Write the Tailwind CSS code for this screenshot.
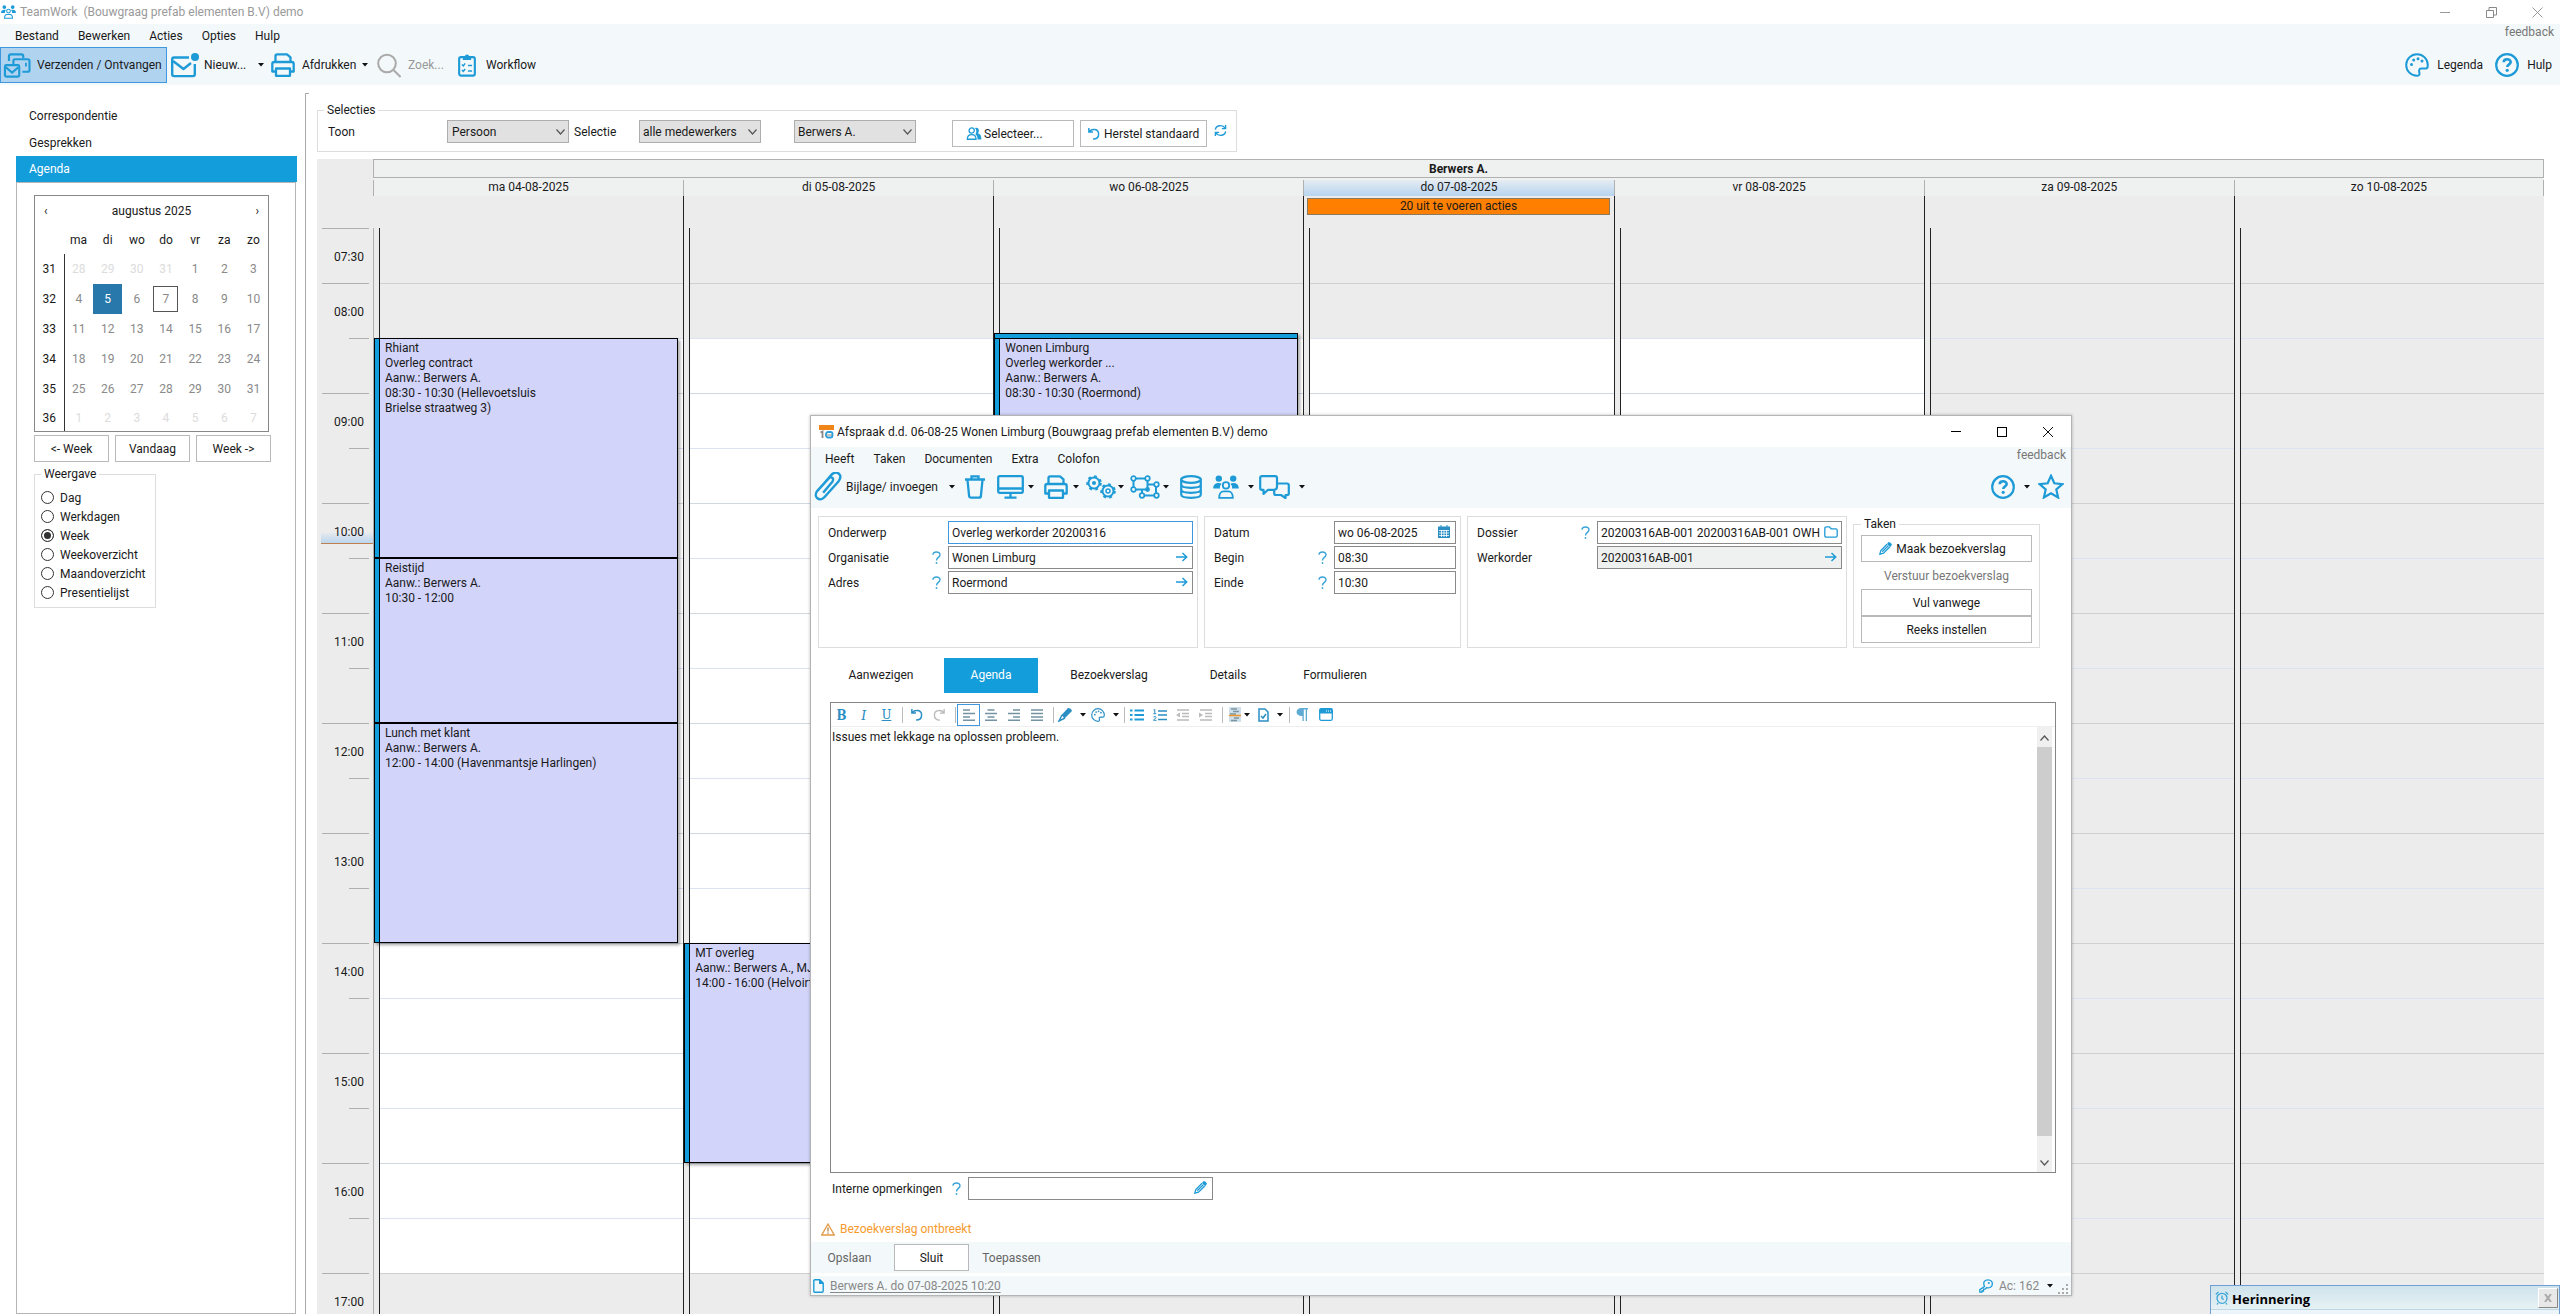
<!DOCTYPE html>
<html lang="nl">
<head>
<meta charset="utf-8">
<meta name="viewport" content="width=device-width, initial-scale=1">
<title>TeamWork (Bouwgraag prefab elementen B.V) demo</title>
<script src="https://cdn.jsdelivr.net/npm/@tailwindcss/browser@4"></script>
</head>
<body class="relative flex h-screen flex-col overflow-hidden bg-white font-['Roboto','Noto_Sans',sans-serif] text-[12px] leading-4 text-[#1a1a1a]">

<!-- Icon set -->
<svg class="hidden" aria-hidden="true">
  <defs>
    <symbol id="i-caret" viewBox="0 0 6 4"><path d="M0 0h6L3 3.6z" fill="#111"/></symbol>
    <symbol id="i-people" viewBox="0 0 32 30"><g fill="currentColor"><circle cx="7" cy="4.500" r="4"/><circle cx="25" cy="4.500" r="4"/><path d="M0 17c0-5 3-7 7-7 1.500 0 2.500.3 3.500.8C8.500 12.500 8 15 8.500 17zM32 17c0-5-3-7-7-7-1.500 0-2.500.3-3.500.8 2 1.700 2.500 4.200 2 6.200z"/></g><g fill="none" stroke="currentColor" stroke-width="2.300"><circle cx="16" cy="13" r="4"/><path d="M7.500 28.500c0-5 2.500-8 5.500-8h6c3 0 5.500 3 5.500 8z"/></g></symbol>
    <symbol id="i-mailsync" viewBox="0 0 30 28"><g fill="none" stroke="currentColor" stroke-width="2.400" stroke-linejoin="round"><path d="M6 9V3.500Q6 1.500 8 1.500h12q2 0 2 2V6"/><path d="M11 13V8.500Q11 7 13 7h14q2 0 2 2v10q0 2-2 2h-6"/><rect x="1.500" y="13.500" width="16" height="13" rx="1.500"/><path d="M2.500 16l7 6 7-6"/></g><path d="M24 11h2v4h-2z" fill="currentColor"/></symbol>
    <symbol id="i-mailnew" viewBox="0 0 28 25"><g fill="none" stroke="currentColor" stroke-width="2.400" stroke-linejoin="round"><path d="M18 4.500H3q-1.800 0-1.800 1.800v15q0 1.800 1.800 1.800h19q1.800 0 1.800-1.800V11"/><path d="M2 8l10.500 8L20 10"/></g><circle cx="24" cy="4" r="4" fill="currentColor"/></symbol>
    <symbol id="i-printer" viewBox="0 0 24 24"><g fill="none" stroke="currentColor" stroke-width="2.300" stroke-linejoin="round"><path d="M4.500 9V3q0-1.700 1.700-1.700H16l3.500 3V9"/><path d="M5 18.500H1.300V11q0-2 2-2h17.400q2 0 2 2v7.500H19"/><rect x="5" y="15.500" width="14" height="7.300"/></g></symbol>
    <symbol id="i-search" viewBox="0 0 24 24"><g fill="none" stroke="currentColor" stroke-width="2"><circle cx="10" cy="10" r="8.800"/><path d="M16.500 16.500l7 7"/></g></symbol>
    <symbol id="i-clip" viewBox="0 0 20 26"><g fill="none" stroke="currentColor" stroke-width="2.300"><rect x="1.500" y="4.500" width="17" height="20" rx="2"/><path d="M4.500 12.500l1.500 1.500 2-2.700M4.500 18.500L6 20l2-2.700M11 13.500h4.500M11 19.500h4.500" stroke-width="1.600"/></g><path d="M5.500 3.500h2a2.600 2.600 0 0 1 5 0h2v4h-9z" fill="currentColor"/></symbol>
    <symbol id="i-palette" viewBox="0 0 24 24"><path d="M12 1.200a10.800 10.800 0 0 0 0 21.600c1.800 0 2.800-1 2.500-2.600-.7-2.400-.7-4.600 1.700-4.600h4.600c1.400 0 2-.9 2-3.400C22.800 6 18 1.200 12 1.200z" fill="none" stroke="currentColor" stroke-width="2"/><g fill="currentColor"><circle cx="6.500" cy="11.500" r="1.500"/><circle cx="8.700" cy="7" r="1.500"/><circle cx="13" cy="5.700" r="1.500"/><circle cx="17" cy="8" r="1.500"/></g></symbol>
    <symbol id="i-help" viewBox="0 0 24 24"><circle cx="12" cy="12" r="10.800" fill="none" stroke="currentColor" stroke-width="2.200"/><path d="M8.700 9.300c0-4 7-4 7-.2 0 2.500-3.400 2.200-3.400 5" fill="none" stroke="currentColor" stroke-width="2.600"/><circle cx="12.200" cy="17.300" r="1.600" fill="currentColor"/></symbol>
    <symbol id="i-q" viewBox="0 0 9 13"><path d="M1 3.800C1 0 8 0 8 3.700 8 6.500 4.500 6.300 4.500 9.500" fill="none" stroke="currentColor" stroke-width="1.400"/><circle cx="4.500" cy="12" r=".9" fill="currentColor"/></symbol>
    <symbol id="i-arrow" viewBox="0 0 12 10"><path d="M0 5h10.500M6.500 1l4.200 4-4.200 4" fill="none" stroke="currentColor" stroke-width="1.500"/></symbol>
    <symbol id="i-chev" viewBox="0 0 9 6"><path d="M.5.500l4 4.500 4-4.500" fill="none" stroke="#555" stroke-width="1.200"/></symbol>
    <symbol id="i-persons" viewBox="0 0 16 14"><g fill="none" stroke="currentColor" stroke-width="1.400"><circle cx="5.500" cy="3.800" r="2.800"/><path d="M.8 13.200c0-3.500 1.500-5 4.700-5s4.700 1.500 4.700 5z"/></g><path d="M9 1.200c4-1.500 5.500 3 3.200 5.600 2.500.6 3.800 2.500 3.800 6.700h-4.200c0-3-.6-4.600-2.300-5.800C11 5.500 10.800 3 9 1.200z" fill="currentColor"/></symbol>
    <symbol id="i-undo" viewBox="0 0 14 14"><path d="M2 1v4.500h4.500M2.500 5C5 1.500 12.500 1.800 12.500 7.500c0 3.500-2.500 5.500-6 5.500" fill="none" stroke="currentColor" stroke-width="1.600"/></symbol>
    <symbol id="i-redo" viewBox="0 0 14 14"><path d="M12 1v4.500H7.500M11.500 5C9 1.500 1.500 1.800 1.500 7.500c0 3.500 2.500 5.500 6 5.500" fill="none" stroke="currentColor" stroke-width="1.500"/></symbol>
    <symbol id="i-refresh" viewBox="0 0 14 14"><path d="M1.500 6C2 1.500 9 0 12 4.500M12.500 1v4H8.500M12.500 8C12 12.500 5 14 2 9.500M1.500 13V9h4" fill="none" stroke="currentColor" stroke-width="1.500"/></symbol>
    <symbol id="i-calcolor" viewBox="0 0 15 15"><rect width="15" height="5" y="1" fill="#f08519"/><g fill="none" stroke-width="1.800"><path d="M1.500 8.500L3.500 7.500V14" stroke="#888"/><rect x="7" y="8" width="6.500" height="5.500" rx="2" stroke="#2b9fdc"/><path d="M7 11h6" stroke="#888" stroke-width="1"/></g></symbol>
    <symbol id="i-paperclip" viewBox="0 0 30 30"><path d="M10.500 21.500L20 10c2.500-3.500-1.500-6-4-3.200L4.500 19.500c-5 6.500 2.500 12 7.500 6.300L26.500 9.500c5-7-2.500-12-7.500-6.500L10 13.500" fill="none" stroke="currentColor" stroke-width="2.500"/></symbol>
    <symbol id="i-trash" viewBox="0 0 20 24"><g fill="none" stroke="currentColor" stroke-width="2.300"><path d="M0 4.500h20M6.500 4V1.300h7V4M2.500 5l1.600 16q.2 1.700 2 1.700h7.800q1.800 0 2-1.700L17.500 5"/></g></symbol>
    <symbol id="i-monitor" viewBox="0 0 27 24"><g fill="none" stroke="currentColor" stroke-width="2.300"><rect x="1.200" y="1.200" width="24.600" height="16.600" rx="1.500"/><path d="M1 13.500h25M13.500 18v4M7.500 22.700h12"/></g></symbol>
    <symbol id="i-gears" viewBox="0 0 30 24"><g fill="none" stroke="currentColor" stroke-width="2"><circle cx="8" cy="8" r="5.500"/><circle cx="22" cy="16" r="5.500"/><g stroke-width="2.600" stroke-dasharray="2.600 3.400"><circle cx="8" cy="8" r="6.500"/><circle cx="22" cy="16" r="6.500"/></g></g><circle cx="8" cy="8" r="2" fill="currentColor"/><circle cx="22" cy="16" r="2" fill="none" stroke="currentColor" stroke-width="1.500"/></symbol>
    <symbol id="i-net" viewBox="0 0 30 24"><g fill="none" stroke="currentColor" stroke-width="2"><path d="M3.500 3.500h14v11h-14zM17.500 9.500H26v11H12v-6"/></g><g fill="#f3f8fa" stroke="currentColor" stroke-width="1.700"><circle cx="3.500" cy="3.500" r="2.300"/><circle cx="17.500" cy="3.500" r="2.300"/><circle cx="3.500" cy="14.500" r="2.300"/><circle cx="26.500" cy="9.500" r="2.300"/><circle cx="12" cy="20.500" r="2.300"/><circle cx="26.500" cy="20.500" r="2.300"/></g><circle cx="17.500" cy="14.500" r="2.400" fill="currentColor"/></symbol>
    <symbol id="i-db" viewBox="0 0 22 24"><g fill="none" stroke="currentColor" stroke-width="2.200"><ellipse cx="11" cy="4.500" rx="9.800" ry="3.300"/><path d="M1.200 4.500v15c0 4.400 19.600 4.400 19.600 0v-15M1.200 9.500c0 4.400 19.600 4.400 19.600 0M1.200 14.500c0 4.400 19.600 4.400 19.600 0"/></g></symbol>
    <symbol id="i-chat" viewBox="0 0 31 24"><g fill="none" stroke="currentColor" stroke-width="2.200" stroke-linejoin="round"><path d="M18 6V3q0-1.800-1.800-1.800H3Q1.200 1.200 1.200 3v10q0 1.800 1.800 1.800h1.500V19l4.500-4.200h3"/><path d="M17 8.500h11q1.800 0 1.800 1.800v8q0 1.800-1.800 1.800h-1.500v3L22 20h-5q-1.800 0-1.800-1.800v-3"/><path d="M12 14.800h3q3 0 3-3V6"/></g></symbol>
    <symbol id="i-star" viewBox="0 0 26 25"><path d="M13 1.800l3.300 7.500 8.200.8-6.200 5.400 1.800 8-7.100-4.200-7.100 4.200 1.800-8L1.500 10.100l8.200-.8z" fill="none" stroke="currentColor" stroke-width="2.200"/></symbol>
    <symbol id="i-caltiny" viewBox="0 0 12 13"><path d="M0 2h12v11H0zM3 0v3M9 0v3" fill="currentColor" stroke="currentColor"/><path d="M1 5.500h10M1 8h10M1 10.500h10M3.500 5v7M6 5v7M8.500 5v7" stroke="#fff" stroke-width=".8"/></symbol>
    <symbol id="i-folder" viewBox="0 0 14 12"><path d="M.8 9.500v-7Q.8.800 2.500.8h2.700l2 2h4.500q1.500 0 1.500 1.500v5.200q0 1.700-1.500 1.700H2.500Q.8 11.200.8 9.500z" fill="none" stroke="currentColor" stroke-width="1.300"/></symbol>
    <symbol id="i-pencil" viewBox="0 0 13 13"><path d="M9.500 0q2.500 0 3.500 2.700L11.300 5 8 2z" fill="currentColor"/><path d="M8 2.200L1.800 8.500.8 12.200l3.700-1L11 4.800M9.500 3.500L3.200 9.800" fill="none" stroke="currentColor" stroke-width="1.300"/></symbol>
    <symbol id="i-brush" viewBox="0 0 14 14"><path d="M10 0q3 0 4 3L6.500 10.500 3.500 7z" fill="currentColor"/><path d="M4 7L1 13l6-3" fill="none" stroke="currentColor" stroke-width="1.500"/></symbol>
    <symbol id="i-al" viewBox="0 0 12 12"><path d="M0 1h7M0 4.500h12M0 8h7M0 11.300h12" stroke="currentColor" stroke-width="1.500"/></symbol>
    <symbol id="i-ac" viewBox="0 0 12 12"><path d="M2.500 1h7M0 4.500h12M2.500 8h7M0 11.300h12" stroke="currentColor" stroke-width="1.500"/></symbol>
    <symbol id="i-ar" viewBox="0 0 12 12"><path d="M5 1h7M0 4.500h12M5 8h7M0 11.300h12" stroke="currentColor" stroke-width="1.500"/></symbol>
    <symbol id="i-aj" viewBox="0 0 12 12"><path d="M0 1h12M0 4.500h12M0 8h12M0 11.300h12" stroke="currentColor" stroke-width="1.500"/></symbol>
    <symbol id="i-ul" viewBox="0 0 14 12"><path d="M4.500 1.500H14M4.500 6H14M4.500 10.500H14M0 1.500h2.500M0 6h2.500M0 10.500h2.500" stroke="currentColor" stroke-width="1.800"/></symbol>
    <symbol id="i-ol" viewBox="0 0 14 12"><path d="M5 2H14M5 6H14M5 10.500H14" stroke="currentColor" stroke-width="1.500"/><path d="M.5 1l1.300-.5V4.500M.3 4.700h3M.5 8Q3 6.500 3 8.500L.5 11.300h3" fill="none" stroke="currentColor"/></symbol>
    <symbol id="i-out" viewBox="0 0 13 12"><path d="M1 1h12M6 4.500h7M6 7.500h7M1 11h12" stroke="currentColor" stroke-width="1.400"/><path d="M0 6l4-2.500v5z" fill="currentColor"/></symbol>
    <symbol id="i-in" viewBox="0 0 13 12"><path d="M1 1h12M6 4.500h7M6 7.500h7M1 11h12" stroke="currentColor" stroke-width="1.400"/><path d="M4 6L0 3.500v5z" fill="currentColor"/></symbol>
    <symbol id="i-fmt" viewBox="0 0 12 15"><rect width="12" height="15" fill="#cfe0ea"/><path d="M2 2h6M4 4.500h6M1 7h6M5 11h5M2 13.500h6" stroke="#7b95a3" stroke-width="1.300"/><path d="M0 8.500h12" stroke="#f0962e" stroke-width="1.500"/></symbol>
    <symbol id="i-doccheck" viewBox="0 0 11 14"><path d="M1 1h6l3 3v9H1zM3 8l2 2 3-4" fill="none" stroke="currentColor" stroke-width="1.500"/></symbol>
    <symbol id="i-para" viewBox="0 0 12 14"><path d="M5.500 0H12v1.500h-1V13H9.700V1.500H7.800V13H6.500V8C-1.500 8-1 0 5.500 0z" fill="currentColor" fill-opacity=".75"/></symbol>
    <symbol id="i-win" viewBox="0 0 14 13"><rect x=".7" y=".7" width="12.600" height="11.600" rx="1.500" fill="#fff" stroke="currentColor" stroke-width="1.300"/><path d="M.7.700h12.600v4.800H.7z" fill="currentColor"/><path d="M7 3h5" stroke="#fff" stroke-dasharray="1 1"/></symbol>
    <symbol id="i-warn" viewBox="0 0 14 13"><path d="M7 1L13.200 12H.8z" fill="none" stroke="#e59a45" stroke-width="1.300"/><path d="M7 4.500v4M7 9.500v1.200" stroke="#b08040" stroke-width="1.300"/></symbol>
    <symbol id="i-doc" viewBox="0 0 11 14"><path d="M2 .8h4.800L10.200 4v8q0 1.200-1.200 1.200H2Q.8 13.200.8 12V2Q.8.800 2 .8z" fill="none" stroke="currentColor" stroke-width="1.400"/><path d="M6 0l5 5H6z" fill="currentColor"/></symbol>
    <symbol id="i-key" viewBox="0 0 14 14"><path d="M5.500 7.500C3.500 3 6 .8 9 .8s4.600 2 4.300 4.500S10.500 9.500 7.500 8.700L6 10.200H4.500V12H3v1.200H.8v-2.500z" fill="none" stroke="currentColor" stroke-width="1.300"/><circle cx="9.800" cy="4" r="1" fill="currentColor"/></symbol>
    <symbol id="i-alarm" viewBox="0 0 14 14"><g fill="none" stroke="currentColor" stroke-width="1.300"><circle cx="7" cy="7.300" r="5"/><path d="M7 4.500v3l1.800 1M.8 3.500L3.500.9M13.200 3.500L10.500.9M3 12l-1 1.500M11 12l1 1.500"/></g></symbol>
  </defs>
</svg>

<!-- Title bar -->
<header class="shrink-0">
  <div class="flex h-6 items-center bg-white text-[#9a9a9a]">
    <svg class="ml-px h-[14px] w-[15px] text-[#1e9bd7]"><use href="#i-people"/></svg>
    <span class="ml-1 whitespace-pre">TeamWork  (Bouwgraag prefab elementen B.V) demo</span>
    <div class="ml-auto flex items-center">
      <button class="flex h-6 w-[46px] items-center justify-center" aria-label="Minimaliseren"><span class="h-px w-[10px] bg-[#999]"></span></button>
      <button class="flex h-6 w-[46px] items-center justify-center" aria-label="Verkleinen"><svg class="size-[11px]" viewBox="0 0 11 11" fill="none" stroke="#888"><path d="M.5 3.500h7v7h-7zM3 3V.5h7.500V8H8"/></svg></button>
      <button class="flex h-6 w-[46px] items-center justify-center" aria-label="Sluiten"><svg class="size-[11px]" viewBox="0 0 11 11" stroke="#999"><path d="M.5.500l10 10M10.500.500l-10 10"/></svg></button>
    </div>
  </div>
  <div class="h-[61px] bg-[#f3f8fa]">
    <div class="flex h-[23px] justify-between">
      <nav class="flex items-center gap-[19px] pl-[15px]">
        <a href="#">Bestand</a><a href="#">Bewerken</a><a href="#">Acties</a><a href="#">Opties</a><a href="#">Hulp</a>
      </nav>
      <a href="#" class="pr-1.5 text-[#777]">feedback</a>
    </div>
    <div class="flex h-[36px] items-center">
      <button class="flex h-[36px] w-[167px] items-center gap-[5px] border border-[#3f97e0] bg-[#b0d3f0] pl-px whitespace-nowrap"><svg class="h-[25px] w-[30px] text-[#1e9bd7]"><use href="#i-mailsync"/></svg>Verzenden / Ontvangen</button>
      <button class="ml-1 flex w-[97px] items-center"><svg class="h-[25px] w-[28px] text-[#1e9bd7]"><use href="#i-mailnew"/></svg><span class="ml-[5px]">Nieuw...</span><svg class="ml-auto mr-1 h-1 w-1.5"><use href="#i-caret"/></svg></button>
      <button class="ml-[3px] flex w-[100px] items-center"><svg class="size-6 text-[#1e9bd7]"><use href="#i-printer"/></svg><span class="ml-[7px]">Afdrukken</span><svg class="ml-auto mr-[3px] h-1 w-1.5"><use href="#i-caret"/></svg></button>
      <button class="ml-[6px] flex w-[76px] items-center gap-[7px] text-[#999]" disabled><svg class="h-[25px] w-6 text-[#aaa]"><use href="#i-search"/></svg>Zoek...</button>
      <button class="ml-[4px] flex items-center gap-[9px]"><svg class="h-6 w-5 text-[#1e9bd7]"><use href="#i-clip"/></svg>Workflow</button>
      <div class="ml-auto flex items-center pr-2">
        <button class="flex items-center gap-2"><svg class="size-6 text-[#1e9bd7]"><use href="#i-palette"/></svg>Legenda</button>
        <button class="ml-3 flex items-center gap-2"><svg class="size-6 text-[#1e9bd7]"><use href="#i-help"/></svg>Hulp</button>
      </div>
    </div>
  </div>
</header>

<main class="flex min-h-0 flex-1">
  <!-- Sidebar -->
  <aside class="flex w-[297px] shrink-0 flex-col pl-4 pt-[17px]">
    <nav class="flex flex-col">
      <a href="#" class="flex h-[27px] items-center pl-[13px]">Correspondentie</a>
      <a href="#" class="flex h-[27px] items-center pl-[13px]">Gesprekken</a>
      <a href="#" class="flex h-[26px] items-center bg-[#149ddb] pl-[13px] text-white">Agenda</a>
    </nav>
    <div class="mr-px flex-1 border border-[#b5b5b5] px-[17px] pt-[12px]">
      <div class="w-[235px] border border-[#888]">
        <div class="flex h-[29px] items-center justify-between px-[9px]"><button aria-label="Vorige maand">‹</button><span>augustus 2025</span><button aria-label="Volgende maand">›</button></div>
        <table class="w-full table-fixed border-collapse text-center">
          <thead><tr class="h-[29px]"><th class="w-[29px]"></th><th class="font-normal">ma</th><th class="font-normal">di</th><th class="font-normal">wo</th><th class="font-normal">do</th><th class="font-normal">vr</th><th class="font-normal">za</th><th class="font-normal">zo</th></tr></thead>
          <tbody id="month" class="text-[#8a8a8a]"></tbody>
        </table>
      </div>
      <div class="mt-[3px] flex gap-1.5">
        <button class="h-[27px] w-[75px] border border-[#b9b9b9]">&lt;- Week</button>
        <button class="h-[27px] w-[75px] border border-[#b9b9b9]">Vandaag</button>
        <button class="h-[27px] w-[75px] border border-[#b9b9b9]">Week -&gt;</button>
      </div>
      <fieldset class="mt-1 w-[122px] border border-[#ddd] pb-[5px] pl-1.5">
        <legend class="px-[3px]">Weergave</legend>
        <div id="views" class="pt-[6px]"></div>
      </fieldset>
    </div>
  </aside>

  <!-- Agenda -->
  <section class="relative ml-2 mt-2 flex min-w-0 flex-1 flex-col border-l border-[#aaa] pl-[11px] pr-4 before:absolute before:left-0 before:top-0 before:h-px before:w-[3px] before:bg-[#aaa]">
    <fieldset class="mt-[9px] flex h-[50px] w-[920px] shrink-0 border border-[#ddd] pl-2.5">
      <legend class="ml-[-4px] px-[3px]">Selecties</legend>
      <div class="flex items-start pt-[2px]">
        <label for="toon" class="w-[119px] pt-1">Toon</label>
        <div class="relative h-[23px] w-[122px]"><select id="toon" class="h-full w-full appearance-none border border-[#adadad] bg-[#e1e1e1] pl-1"><option>Persoon</option></select><svg class="pointer-events-none absolute right-1 top-[9px] h-1.5 w-[9px]"><use href="#i-chev"/></svg></div>
        <label for="sel" class="w-[70px] pl-[5px] pt-1">Selectie</label>
        <div class="relative h-[23px] w-[122px]"><select id="sel" class="h-full w-full appearance-none border border-[#adadad] bg-[#e1e1e1] pl-[3px]"><option>alle medewerkers</option></select><svg class="pointer-events-none absolute right-1 top-[9px] h-1.5 w-[9px]"><use href="#i-chev"/></svg></div>
        <div class="relative ml-[33px] h-[23px] w-[122px]"><select aria-label="Medewerker" class="h-full w-full appearance-none border border-[#adadad] bg-[#e1e1e1] pl-[3px]"><option>Berwers A.</option></select><svg class="pointer-events-none absolute right-1 top-[9px] h-1.5 w-[9px]"><use href="#i-chev"/></svg></div>
        <button class="ml-9 flex h-[27px] w-[122px] items-center gap-0.5 border border-[#b9b9b9] pl-[13px]"><svg class="h-[13px] w-4 text-[#1e9bd7]"><use href="#i-persons"/></svg>Selecteer...</button>
        <button class="ml-1.5 flex h-[27px] w-[127px] items-center gap-1 border border-[#b9b9b9] pl-[6px] whitespace-nowrap"><svg class="size-[13px] shrink-0 text-[#1e9bd7]"><use href="#i-undo"/></svg>Herstel standaard</button>
        <button class="ml-[7px] mt-1" aria-label="Vernieuwen"><svg class="size-[13px] text-[#1e9bd7]"><use href="#i-refresh"/></svg></button>
      </div>
    </fieldset>

    <div class="mt-[7px] flex min-h-0 flex-1 overflow-hidden bg-[#ececec]">
      <div id="times" class="w-[56px] shrink-0 pt-[69px] pl-1"></div>
      <div class="min-w-0 flex-1">
        <div class="h-[19px] border border-[#b0b0b0] bg-[#eff1f1] text-center font-bold leading-[19px]">Berwers A.</div>
        <div id="days" class="grid grid-cols-7"></div>
      </div>
    </div>
  </section>
</main>

<!-- Appointment window -->
<div role="dialog" aria-labelledby="dlg" class="absolute left-[810px] top-[415px] flex h-[881px] w-[1262px] flex-col border border-[#b4b4b4] bg-white shadow-[0_0_3px_rgba(0,0,0,0.25)]">
  <div class="flex h-[31px] shrink-0 items-center pl-2">
    <svg class="size-[15px]"><use href="#i-calcolor"/></svg>
    <h1 id="dlg" class="ml-[3px]">Afspraak d.d. 06-08-25 Wonen Limburg (Bouwgraag prefab elementen B.V) demo</h1>
    <div class="ml-auto flex">
      <button class="flex h-[28px] w-[46px] items-center justify-center" aria-label="Minimaliseren"><span class="h-px w-[10px] bg-black"></span></button>
      <button class="flex h-[28px] w-[46px] items-center justify-center" aria-label="Maximaliseren"><span class="size-[10px] border border-black"></span></button>
      <button class="flex h-[28px] w-[46px] items-center justify-center" aria-label="Sluiten"><svg class="size-[10px]" viewBox="0 0 10 10" stroke="#111"><path d="M0 0l10 10M10 0L0 10"/></svg></button>
    </div>
  </div>
  <div class="h-[61px] shrink-0 bg-[#f3f8fa]">
    <div class="flex h-[23px] justify-between">
      <nav class="flex items-center gap-[19px] pl-[14px]"><a href="#">Heeft</a><a href="#">Taken</a><a href="#">Documenten</a><a href="#">Extra</a><a href="#">Colofon</a></nav>
      <a href="#" class="pr-[5px] text-[#777]">feedback</a>
    </div>
    <div class="flex h-[33px] items-center text-[#1e9bd7]">
      <button class="ml-[2px] flex w-[142px] items-center text-[#1a1a1a]"><svg class="size-[29px] text-[#1e9bd7]"><use href="#i-paperclip"/></svg><span class="ml-1">Bijlage/ invoegen</span><svg class="ml-auto h-1 w-1.5"><use href="#i-caret"/></svg></button>
      <button class="ml-[10px]" aria-label="Verwijderen"><svg class="h-6 w-5"><use href="#i-trash"/></svg></button>
      <button class="ml-[12px] flex w-[37px] items-center justify-between" aria-label="Scherm"><svg class="h-6 w-[27px]"><use href="#i-monitor"/></svg><svg class="h-1 w-1.5"><use href="#i-caret"/></svg></button>
      <button class="ml-[10px] flex w-[35px] items-center justify-between" aria-label="Afdrukken"><svg class="size-6"><use href="#i-printer"/></svg><svg class="h-1 w-1.5"><use href="#i-caret"/></svg></button>
      <button class="ml-[7px] flex w-[38px] items-center justify-between" aria-label="Instellingen"><svg class="h-6 w-[30px]"><use href="#i-gears"/></svg><svg class="h-1 w-1.5"><use href="#i-caret"/></svg></button>
      <button class="ml-[6px] flex w-[39px] items-center justify-between" aria-label="Relaties"><svg class="h-6 w-[30px]"><use href="#i-net"/></svg><svg class="h-1 w-1.5"><use href="#i-caret"/></svg></button>
      <button class="ml-[11px]" aria-label="Database"><svg class="h-6 w-[22px]"><use href="#i-db"/></svg></button>
      <button class="ml-[9px] flex w-[43px] items-center justify-between" aria-label="Personen"><svg class="h-6 w-[30px]"><use href="#i-people"/></svg><svg class="h-1 w-1.5"><use href="#i-caret"/></svg></button>
      <button class="ml-[5px] flex w-[46px] items-center justify-between" aria-label="Gesprek"><svg class="h-6 w-[31px]"><use href="#i-chat"/></svg><svg class="h-1 w-1.5"><use href="#i-caret"/></svg></button>
      <button class="ml-auto flex w-[39px] items-center justify-between" aria-label="Hulp"><svg class="size-6"><use href="#i-help"/></svg><svg class="h-1 w-1.5"><use href="#i-caret"/></svg></button>
      <button class="ml-2 mr-[7px]" aria-label="Favoriet"><svg class="h-[25px] w-[26px]"><use href="#i-star"/></svg></button>
    </div>
  </div>

  <div class="flex h-[140px] shrink-0 items-end gap-1.5 pl-[7px]">
    <div class="flex h-[132px] w-[380px] flex-col gap-0.5 border border-[#ddd] pl-[9px] pt-1">
      <div class="flex h-[23px] items-center"><label for="f1" class="w-[120px]">Onderwerp</label><input id="f1" value="Overleg werkorder 20200316" class="h-[23px] w-[245px] border border-[#3f97e0] px-[3px]"></div>
      <div class="relative flex h-[23px] items-center"><label for="f2" class="w-[104px]">Organisatie</label><svg class="mr-[7px] h-[13px] w-[9px] text-[#3aa4d8]"><use href="#i-q"/></svg><input id="f2" value="Wonen Limburg" class="h-[23px] w-[245px] border border-[#8a8a8a] px-[3px]"><svg class="absolute right-[9px] top-[6px] h-[10px] w-3 text-[#1e9bd7]"><use href="#i-arrow"/></svg></div>
      <div class="relative flex h-[23px] items-center"><label for="f3" class="w-[104px]">Adres</label><svg class="mr-[7px] h-[13px] w-[9px] text-[#3aa4d8]"><use href="#i-q"/></svg><input id="f3" value="Roermond" class="h-[23px] w-[245px] border border-[#8a8a8a] px-[3px]"><svg class="absolute right-[9px] top-[6px] h-[10px] w-3 text-[#1e9bd7]"><use href="#i-arrow"/></svg></div>
    </div>
    <div class="flex h-[132px] w-[257px] flex-col gap-0.5 border border-[#ddd] pl-[9px] pt-1">
      <div class="relative flex h-[23px] items-center"><label for="f4" class="w-[120px]">Datum</label><input id="f4" value="wo 06-08-2025" class="h-[23px] w-[122px] border border-[#8a8a8a] px-[3px]"><svg class="absolute right-[10px] top-[4px] h-[13px] w-3 text-[#2b8fc4]"><use href="#i-caltiny"/></svg></div>
      <div class="flex h-[23px] items-center"><label for="f5" class="w-[104px]">Begin</label><svg class="mr-[7px] h-[13px] w-[9px] text-[#3aa4d8]"><use href="#i-q"/></svg><input id="f5" value="08:30" class="h-[23px] w-[122px] border border-[#8a8a8a] px-[3px]"></div>
      <div class="flex h-[23px] items-center"><label for="f6" class="w-[104px]">Einde</label><svg class="mr-[7px] h-[13px] w-[9px] text-[#3aa4d8]"><use href="#i-q"/></svg><input id="f6" value="10:30" class="h-[23px] w-[122px] border border-[#8a8a8a] px-[3px]"></div>
    </div>
    <div class="flex h-[132px] w-[380px] flex-col gap-0.5 border border-[#ddd] pl-[9px] pt-1">
      <div class="relative flex h-[23px] items-center"><label for="f7" class="w-[104px]">Dossier</label><svg class="mr-[7px] h-[13px] w-[9px] text-[#3aa4d8]"><use href="#i-q"/></svg><input id="f7" value="20200316AB-001 20200316AB-001 OWH Derde" class="h-[23px] w-[245px] border border-[#8a8a8a] pl-[3px] pr-[20px]"><svg class="absolute right-[8px] top-[5px] h-3 w-[14px] text-[#1e9bd7]"><use href="#i-folder"/></svg></div>
      <div class="relative flex h-[23px] items-center"><label for="f8" class="w-[120px]">Werkorder</label><input id="f8" value="20200316AB-001" class="h-[23px] w-[245px] border border-[#8a8a8a] bg-[#eff1f0] px-[3px]"><svg class="absolute right-[9px] top-[6px] h-[10px] w-3 text-[#1e9bd7]"><use href="#i-arrow"/></svg></div>
    </div>
    <fieldset class="h-[132px] w-[187px] border border-[#ddd] px-[7px]">
      <legend class="px-[3px]">Taken</legend>
      <div class="flex flex-col pt-[3px]">
        <button class="flex h-[27px] items-center justify-center gap-1 border border-[#b9b9b9] pr-2"><svg class="size-[13px] text-[#1e9bd7]"><use href="#i-pencil"/></svg>Maak bezoekverslag</button>
        <button class="h-[27px] text-[#777]" disabled>Verstuur bezoekverslag</button>
        <button class="h-[27px] border border-[#b9b9b9]">Vul vanwege</button>
        <button class="h-[27px] border border-[#b9b9b9]">Reeks instellen</button>
      </div>
    </fieldset>
  </div>

  <div class="ml-[7px] flex h-[54px] shrink-0 items-center" role="tablist">
    <button role="tab" class="h-[35px] w-[126px]">Aanwezigen</button>
    <button role="tab" aria-selected="true" class="h-[35px] w-[94px] bg-[#149ddb] text-white">Agenda</button>
    <button role="tab" class="h-[35px] w-[142px]">Bezoekverslag</button>
    <button role="tab" class="h-[35px] w-[96px]">Details</button>
    <button role="tab" class="h-[35px] w-[118px]">Formulieren</button>
  </div>

  <div class="ml-[19px] mr-[15px] flex h-[471px] shrink-0 flex-col border border-[#858585]">
    <div class="flex h-6 shrink-0 items-center border-b border-[#eee] text-[#2b8fc4]">
      <button class="w-[21px] font-serif text-[15px] font-bold">B</button>
      <button class="w-[23px] font-serif text-[15px] italic">I</button>
      <button class="w-[23px] font-serif text-[14px] underline">U</button>
      <span class="ml-[4px] mr-[2px] h-4 w-px bg-[#bbb]"></span>
      <button class="flex w-[22px] justify-center" aria-label="Ongedaan"><svg class="size-[13px]"><use href="#i-undo"/></svg></button>
      <button class="flex w-[24px] justify-center text-[#bbb]" aria-label="Opnieuw"><svg class="size-[13px]"><use href="#i-redo"/></svg></button>
      <span class="ml-[4px] mr-px h-4 w-px bg-[#bbb]"></span>
      <button class="flex h-[22px] w-[23px] items-center justify-center border border-[#3f97e0] text-[#7393a3]" aria-label="Links"><svg class="size-3"><use href="#i-al"/></svg></button>
      <button class="flex w-[22px] justify-center text-[#7393a3]" aria-label="Midden"><svg class="size-3"><use href="#i-ac"/></svg></button>
      <button class="flex w-[23px] justify-center text-[#7393a3]" aria-label="Rechts"><svg class="size-3"><use href="#i-ar"/></svg></button>
      <button class="flex w-[23px] justify-center text-[#7393a3]" aria-label="Uitvullen"><svg class="size-3"><use href="#i-aj"/></svg></button>
      <span class="ml-[5px] mr-[4px] h-4 w-px bg-[#bbb]"></span>
      <button class="flex w-[28px] items-center justify-between" aria-label="Kleur"><svg class="size-[14px]"><use href="#i-brush"/></svg><svg class="h-1 w-1.5"><use href="#i-caret"/></svg></button>
      <button class="ml-[5px] flex w-[28px] items-center justify-between" aria-label="Palet"><svg class="size-[14px]"><use href="#i-palette"/></svg><svg class="h-1 w-1.5"><use href="#i-caret"/></svg></button>
      <span class="mx-[5px] h-4 w-px bg-[#bbb]"></span>
      <button class="flex w-[15px]" aria-label="Opsomming"><svg class="h-3 w-[14px] text-[#1e9bd7]"><use href="#i-ul"/></svg></button>
      <button class="ml-[8px] flex w-[15px]" aria-label="Nummering"><svg class="h-3 w-[14px]"><use href="#i-ol"/></svg></button>
      <button class="ml-[8px] flex w-[15px] text-[#bbb]" aria-label="Inspringing kleiner"><svg class="h-3 w-[13px]"><use href="#i-out"/></svg></button>
      <button class="ml-[8px] flex w-[15px] text-[#bbb]" aria-label="Inspringing groter"><svg class="h-3 w-[13px]"><use href="#i-in"/></svg></button>
      <span class="mr-[6px] ml-[8px] h-4 w-px bg-[#bbb]"></span>
      <button class="flex w-[21px] items-center justify-between" aria-label="Regelafstand"><svg class="h-[15px] w-3"><use href="#i-fmt"/></svg><svg class="h-1 w-1.5"><use href="#i-caret"/></svg></button>
      <button class="ml-[8px] flex w-[25px] items-center justify-between" aria-label="Controle"><svg class="h-[14px] w-[11px]"><use href="#i-doccheck"/></svg><svg class="h-1 w-1.5"><use href="#i-caret"/></svg></button>
      <span class="mx-[6px] h-4 w-px bg-[#bbb]"></span>
      <button aria-label="Alinea"><svg class="h-[14px] w-3"><use href="#i-para"/></svg></button>
      <button class="ml-[11px] text-[#1e9bd7]" aria-label="Venster"><svg class="h-[13px] w-[14px]"><use href="#i-win"/></svg></button>
    </div>
    <div class="flex min-h-0 flex-1">
      <textarea aria-label="Agendatekst" class="flex-1 resize-none pl-px pt-0.5">Issues met lekkage na oplossen probleem.</textarea>
      <div class="mr-[3px] flex w-[15px] flex-col items-center bg-[#f0f0f0]">
        <svg class="mt-2 mb-1.5 h-1.5 w-[9px] shrink-0 rotate-180"><use href="#i-chev"/></svg>
        <div class="w-full flex-1 bg-[#cdcdcd]"></div>
        <svg class="mt-6 mb-[6px] h-1.5 w-[9px] shrink-0"><use href="#i-chev"/></svg>
      </div>
    </div>
  </div>

  <div class="mt-1 flex h-[23px] shrink-0 items-center pl-[21px]">
    <label for="f9" class="w-[120px]">Interne opmerkingen</label><svg class="h-[13px] w-[9px] text-[#3aa4d8]"><use href="#i-q"/></svg>
    <div class="relative ml-[7px]"><input id="f9" class="h-[23px] w-[245px] border border-[#8a8a8a] px-[3px]"><svg class="absolute right-[6px] top-[4px] size-[13px] text-[#1e9bd7]"><use href="#i-pencil"/></svg></div>
  </div>
  <div class="mt-5 flex h-[18px] shrink-0 items-center gap-[5px] pl-[10px] text-[#f59a2e]"><svg class="h-[13px] w-[14px]"><use href="#i-warn"/></svg>Bezoekverslag ontbreekt</div>
  <div class="mt-auto flex h-[31px] shrink-0 items-center bg-[#f3f8fa] pl-[1px]">
    <button class="h-[27px] w-[75px] text-[#666]">Opslaan</button>
    <button class="ml-[7px] h-[27px] w-[75px] border border-[#b9b9b9] bg-white">Sluit</button>
    <button class="ml-[5px] h-[27px] w-[75px] text-[#666]">Toepassen</button>
  </div>
  <div class="mt-[3px] flex h-[19px] shrink-0 items-center bg-[#f3f8fa] pl-[2px] text-[#888]">
    <svg class="h-[14px] w-[11px] text-[#1e9bd7]"><use href="#i-doc"/></svg>
    <a href="#" class="ml-[6px] underline underline-offset-2">Berwers A. do 07-08-2025 10:20</a>
    <svg class="ml-auto size-[14px] text-[#1e9bd7]"><use href="#i-key"/></svg>
    <span class="ml-[6px] w-[39px] whitespace-nowrap">Ac: 162</span>
    <svg class="ml-[9px] h-1 w-1.5"><use href="#i-caret"/></svg>
    <svg class="ml-1 mr-[3px] mt-1.5 size-[11px]" viewBox="0 0 11 11" fill="#aaa"><path d="M9 1h2v2H9zM9 5h2v2H9zM9 9h2v2H9zM5 5h2v2H5zM5 9h2v2H5zM1 9h2v2H1z"/></svg>
  </div>
</div>

<!-- Reminder bar -->
<div class="absolute bottom-0 right-0 h-[29px] w-[350px] border border-b-0 border-[#6f9fd3] bg-[#eef5fa]">
  <div class="flex h-6 items-center border-b border-[#c0d8e4] bg-linear-to-b from-[#cfe3ec] to-[#e6f1f4] pl-1 text-[13px] font-bold text-black">
    <svg class="size-[14px] text-[#3aa4d8]"><use href="#i-alarm"/></svg><span class="ml-[3px] pt-0.5 font-['Open_Sans',sans-serif]">Herinnering</span>
    <button class="ml-auto mr-px flex size-5 items-center justify-center border border-t-white border-l-white border-r-[#888] border-b-[#888] bg-[#e8e8e8]" aria-label="Sluiten"><svg class="size-2" viewBox="0 0 8 8" stroke="#aaa" stroke-width="2"><path d="M1 0l6 8M7 0L1 8"/></svg></button>
  </div>
</div>

<script>
  // Mini month
  const weeks = [[31,28,29,30,31,1,2,3],[32,4,5,6,7,8,9,10],[33,11,12,13,14,15,16,17],[34,18,19,20,21,22,23,24],[35,25,26,27,28,29,30,31],[36,1,2,3,4,5,6,7]];
  document.getElementById('month').innerHTML = weeks.map((w, r) =>
    `<tr class="${r === 5 ? 'h-[27px]' : 'h-[30px]'}"><th class="border-r border-[#333] font-normal text-[#1a1a1a]">${w[0]}</th>` + w.slice(1).map((d, c) => {
      const other = (r === 0 && d > 7) || r === 5;
      if (r === 1 && c === 1) return `<td class="bg-[#2878ab] p-0 text-white">${d}</td>`;
      if (r === 1 && c === 3) return `<td class="p-0"><span class="mx-auto flex h-[26px] w-[25px] items-center justify-center border border-[#555]">${d}</span></td>`;
      return `<td class="${other ? 'p-0 text-[#dcdcdc]' : 'p-0'}">${d}</td>`;
    }).join('') + '</tr>').join('');

  // View options
  document.getElementById('views').innerHTML = ['Dag','Werkdagen','Week','Weekoverzicht','Maandoverzicht','Presentielijst'].map(v =>
    `<label class="flex h-[19px] items-center gap-1.5"><input type="radio" name="view" class="size-[13px] appearance-none rounded-full border border-[#333] bg-white checked:bg-[#333] checked:shadow-[inset_0_0_0_2px_#fff]" ${v === 'Week' ? 'checked' : ''}>${v}</label>`).join('');

  // Time scale: half-hour slots starting at 07:30
  const SLOT = 55, COUNT = 20;
  let t = '';
  for (let i = 0; i < COUNT; i++) {
    const min = 450 + i * 30, full = min % 60 === 0 || i === 0;
    const label = full ? String(Math.floor(min / 60)).padStart(2, '0') + ':' + String(min % 60).padStart(2, '0') : '';
    const now = min === 600 ? '<div class="absolute left-0 right-[-4px] top-[30px] h-[11px] border-b border-[#c08050] bg-linear-to-b from-[#e4e9ee] to-[#bcd6ee] -z-10"></div>' : '';
    t += `<div class="relative z-0 mr-1 h-[55px] pr-[5px] pt-[21px] text-right"><div class="absolute top-0 right-0 h-px bg-[#b0b0b0] ${full ? 'w-[47px]' : 'w-5'}"></div>${now}${label}</div>`;
  }
  document.getElementById('times').innerHTML = t;

  // Day columns; start and span are counted in slots
  const days = [
    { n: 'ma 04-08-2025', ev: [[2,4,['Rhiant','Overleg contract','Aanw.: Berwers A.','08:30 - 10:30 (Hellevoetsluis','Brielse straatweg 3)']],[6,3,['Reistijd','Aanw.: Berwers A.','10:30 - 12:00']],[9,4,['Lunch met klant','Aanw.: Berwers A.','12:00 - 14:00 (Havenmantsje Harlingen)']]] },
    { n: 'di 05-08-2025', ev: [[13,4,['MT overleg','Aanw.: Berwers A., MJ','14:00 - 16:00 (Helvoirt)']]] },
    { n: 'wo 06-08-2025', ev: [[2,4,['Wonen Limburg','Overleg werkorder ...','Aanw.: Berwers A.','08:30 - 10:30 (Roermond)'],true]] },
    { n: 'do 07-08-2025', today: true, ev: [] },
    { n: 'vr 08-08-2025', ev: [] },
    { n: 'za 09-08-2025', off: true, ev: [] },
    { n: 'zo 10-08-2025', off: true, ev: [] }
  ];
  document.getElementById('days').innerHTML = days.map((d, c) => {
    let s = '';
    for (let i = 0; i < COUNT; i++) {
      const work = !d.off && i >= 2 && i < 19, hour = i % 2 === 1;
      const line = i === 0 ? 'border-transparent' : !hour ? 'border-[#dbe3f3]' : work ? 'border-[#d0d8e0]' : 'border-[#d0d0d0]';
      s += `<div class="h-[55px] border-t ${line} ${work ? 'bg-white' : ''}"></div>`;
    }
    const ev = d.ev.map(([a, n, lines, sel]) =>
      `<div class="absolute left-0 right-[5px] flex flex-col border border-black bg-[#149ddb] shadow-[2px_2px_3px_rgba(0,0,0,0.35)]" style="top:${a * SLOT - (sel ? 5 : 0)}px;height:${n * SLOT + (sel ? 5 : 0)}px">
        ${sel ? '<div class="h-[5px] shrink-0 border-b border-black"></div>' : ''}
        <div class="ml-1 flex-1 overflow-hidden border-l border-black bg-[#d2d4fa] pl-[5px] pt-[2px] leading-[15px] whitespace-nowrap">${lines.map(l => `<p>${l}</p>`).join('')}</div></div>`).join('');
    return `<div class="min-w-0">
      <div class="flex h-[18px] items-stretch bg-[#eff1f1] pt-0.5"><div class="flex-1 border-l border-[#b0b0b0] text-center leading-[15px] ${d.today ? 'bg-linear-to-b from-[#e4ecf3] to-[#b8d4ef]' : ''} ${c === 6 ? 'border-r' : ''}">${d.n}</div></div>
      <div class="h-8 border-l pt-0.5 pl-[3px] pr-1 ${c ? 'border-[#222]' : 'border-transparent'}">${d.today ? '<div class="h-[17px] border border-[#8a7a60] bg-[#ff8000] text-center leading-[15px]">20 uit te voeren acties</div>' : ''}</div>
      <div class="relative flex border-l ${c ? 'border-[#222]' : 'border-[#b0b0b0]'}"><div class="ml-[5px] flex-1 border-l border-[#222]">${s}</div>${ev}</div>
    </div>`;
  }).join('');
</script>
</body>
</html>
